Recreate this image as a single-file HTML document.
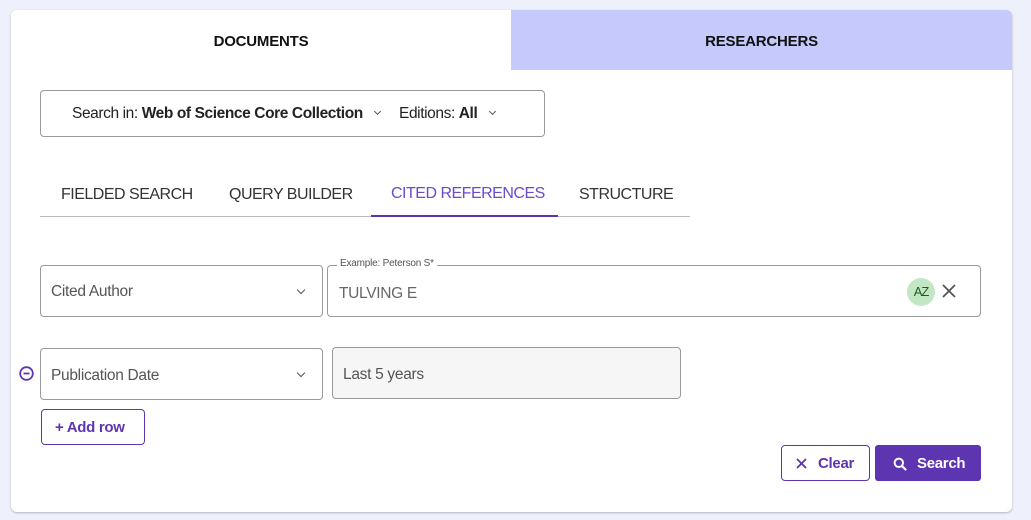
<!DOCTYPE html>
<html><head><meta charset="utf-8"><style>
*{box-sizing:border-box;margin:0;padding:0}
body{width:1031px;height:520px;background:#eef0fb;font-family:"Liberation Sans",sans-serif;position:relative;overflow:hidden;color:#333}
.card{position:absolute;left:11px;top:10px;width:1001px;height:502px;background:#fff;border-radius:6px;box-shadow:0 1px 2px rgba(0,0,0,.25);overflow:hidden}
.tab{position:absolute;top:2px;height:60px;line-height:60px;text-align:center;font-weight:bold;font-size:15px;color:#111;letter-spacing:-.2px}
.abs{position:absolute}
.box{position:absolute;border:1px solid #999;border-radius:4px}
.t{position:absolute;font-size:15.5px;letter-spacing:-.3px;white-space:nowrap}
.chev{position:absolute;width:7px;height:7px;border-right:1.5px solid #555;border-bottom:1.5px solid #555;transform:rotate(45deg)}
</style></head><body>
<div class="card">
 <div class="tab" style="left:0;width:500px;background:#fff;top:0;padding-top:2px">DOCUMENTS</div>
 <div class="tab" style="left:500px;width:501px;background:#c5c9fb;top:0;padding-top:2px">RESEARCHERS</div>

 <div class="box" style="left:29px;top:80px;width:505px;height:47px"></div>
 <div class="t" style="left:61px;top:95px;color:#222;letter-spacing:-.4px">Search in: <b>Web of Science Core Collection</b></div>
 <div class="chev" style="left:364px;top:99px;width:5px;height:5px"></div>
 <div class="t" style="left:388px;top:95px;color:#222;letter-spacing:-.4px">Editions: <b>All</b></div>
 <div class="chev" style="left:479px;top:99px;width:5px;height:5px"></div>

 <div class="t" style="left:50px;top:176px;color:#333;font-size:16px;letter-spacing:-.5px">FIELDED SEARCH</div>
 <div class="t" style="left:218px;top:176px;color:#333;font-size:16px;letter-spacing:-.5px">QUERY BUILDER</div>
 <div class="t" style="left:380px;top:175px;color:#6a4bd0;font-size:16px;letter-spacing:-.5px">CITED REFERENCES</div>
 <div class="t" style="left:568px;top:176px;color:#333;font-size:16px;letter-spacing:-.5px">STRUCTURE</div>
 <div class="abs" style="left:29px;top:206px;width:650px;height:1px;background:#bbb"></div>
 <div class="abs" style="left:360px;top:205px;width:187px;height:2px;background:#5e35b1"></div>

 <div class="box" style="left:29px;top:255px;width:283px;height:52px"></div>
 <div class="t" style="left:40px;top:273px;color:#555">Cited Author</div>
 <div class="chev" style="left:287px;top:277px;width:6px;height:6px"></div>

 <div class="box" style="left:316px;top:255px;width:654px;height:52px"></div>
 <div class="abs" style="left:326px;top:248px;background:#fff;padding:0 3px;font-size:10px;color:#555;letter-spacing:-.2px">Example: Peterson S*</div>
 <div class="t" style="left:328px;top:275px;color:#666">TULVING E</div>
 <div class="abs" style="left:896px;top:268px;width:28px;height:28px;border-radius:50%;background:#c3e6c5;color:#1b5e20;font-size:13px;line-height:28px;text-align:center;letter-spacing:-1px">AZ</div>
 <svg class="abs" style="left:931px;top:274px" width="14" height="14" viewBox="0 0 14 14"><path d="M1 1L13 13M13 1L1 13" stroke="#555" stroke-width="1.8"/></svg>

 <svg class="abs" style="left:8px;top:356px" width="15" height="15" viewBox="0 0 15 15"><circle cx="7.5" cy="7.5" r="6.3" fill="none" stroke="#5e35b1" stroke-width="1.8"/><path d="M4.5 7.5H10.5" stroke="#5e35b1" stroke-width="1.8"/></svg>
 <div class="box" style="left:29px;top:338px;width:283px;height:52px"></div>
 <div class="t" style="left:40px;top:357px;color:#555">Publication Date</div>
 <div class="chev" style="left:287px;top:360px;width:6px;height:6px"></div>
 <div class="box" style="left:321px;top:337px;width:349px;height:52px;background:#f6f6f6"></div>
 <div class="t" style="left:332px;top:356px;color:#555">Last 5 years</div>

 <div class="box" style="left:30px;top:399px;width:104px;height:36px;border-color:#5e35b1"></div>
 <div class="t" style="left:44px;top:409px;color:#5e35b1;font-weight:bold;font-size:15px">+ Add row</div>

 <div class="box" style="left:770px;top:435px;width:89px;height:36px;border-color:#5e35b1"></div>
 <svg class="abs" style="left:785px;top:448px" width="11" height="11" viewBox="0 0 11 11"><path d="M1 1L10 10M10 1L1 10" stroke="#5e35b1" stroke-width="1.8"/></svg>
 <div class="t" style="left:807px;top:445px;color:#5e35b1;font-weight:bold;font-size:15px">Clear</div>
 <div class="abs" style="left:864px;top:435px;width:106px;height:36px;background:#5e35b1;border-radius:3px"></div>
 <svg class="abs" style="left:882px;top:447px" width="14" height="14" viewBox="0 0 14 14"><circle cx="5.8" cy="5.8" r="4.2" fill="none" stroke="#fff" stroke-width="2"/><path d="M9 9L12.5 12.5" stroke="#fff" stroke-width="2.2" stroke-linecap="round"/></svg>
 <div class="t" style="left:906px;top:445px;color:#fff;font-weight:bold;font-size:15px">Search</div>
</div>
</body></html>
